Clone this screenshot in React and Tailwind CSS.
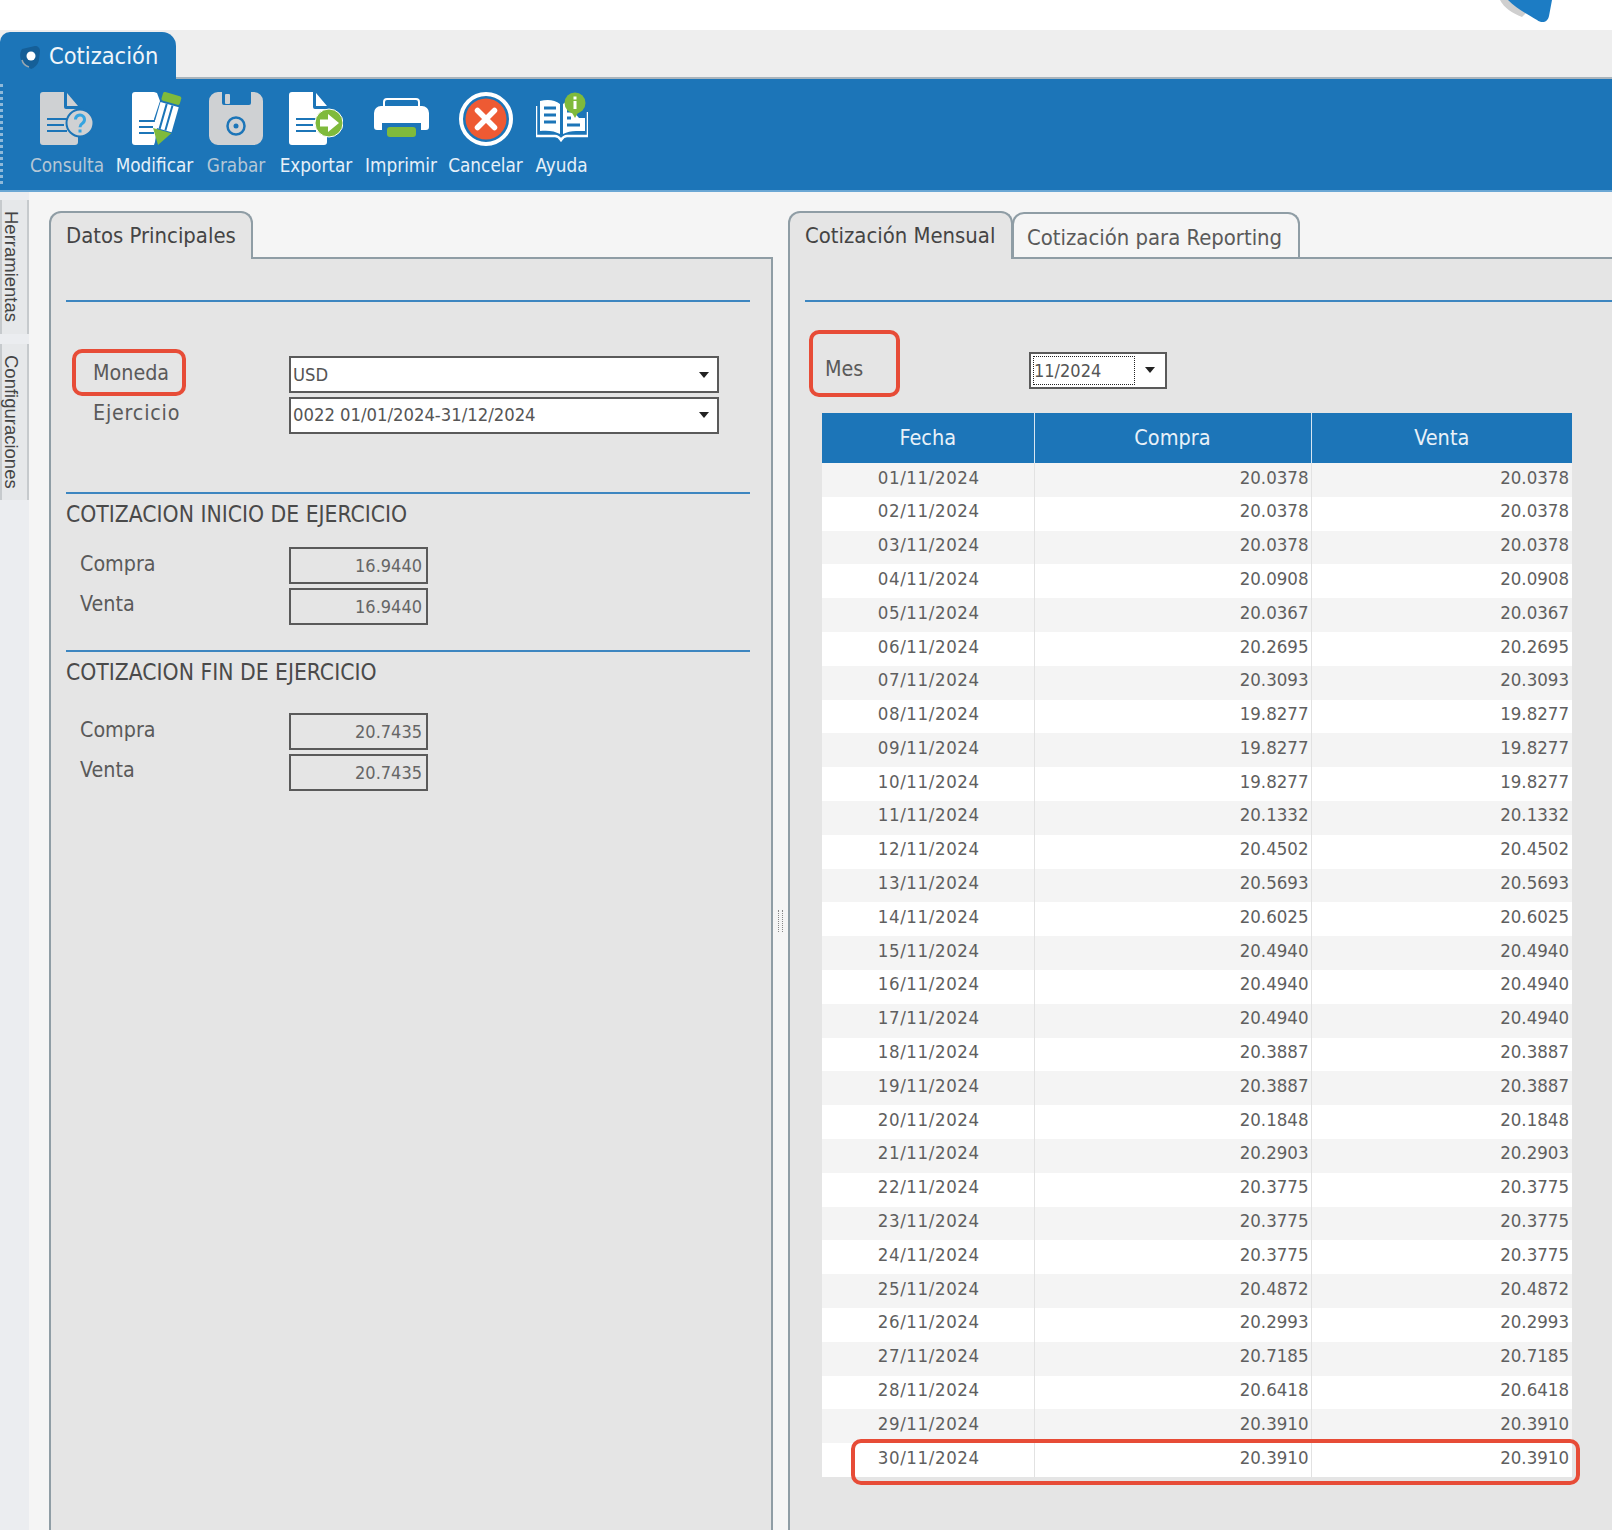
import React from 'react';

const rows = [
  ['01/11/2024', '20.0378'], ['02/11/2024', '20.0378'], ['03/11/2024', '20.0378'],
  ['04/11/2024', '20.0908'], ['05/11/2024', '20.0367'], ['06/11/2024', '20.2695'],
  ['07/11/2024', '20.3093'], ['08/11/2024', '19.8277'], ['09/11/2024', '19.8277'],
  ['10/11/2024', '19.8277'], ['11/11/2024', '20.1332'], ['12/11/2024', '20.4502'],
  ['13/11/2024', '20.5693'], ['14/11/2024', '20.6025'], ['15/11/2024', '20.4940'],
  ['16/11/2024', '20.4940'], ['17/11/2024', '20.4940'], ['18/11/2024', '20.3887'],
  ['19/11/2024', '20.3887'], ['20/11/2024', '20.1848'], ['21/11/2024', '20.2903'],
  ['22/11/2024', '20.3775'], ['23/11/2024', '20.3775'], ['24/11/2024', '20.3775'],
  ['25/11/2024', '20.4872'], ['26/11/2024', '20.2993'], ['27/11/2024', '20.7185'],
  ['28/11/2024', '20.6418'], ['29/11/2024', '20.3910'], ['30/11/2024', '20.3910'],
];

const BLUE = '#1c75b8';

const DocShape = ({ fill }) => (
  <>
    <path d="M3 0h21v15a2 2 0 0 0 2 2h12v33a3 3 0 0 1-3 3H3a3 3 0 0 1-3-3V3a3 3 0 0 1 3-3z" fill={fill} />
    <path d="M27 1l11 13H27z" fill={fill} />
    <path d="M7 27h20M7 33h17M7 39h20" stroke={BLUE} strokeWidth="2" />
  </>
);

const IconConsulta = () => (
  <svg width="54" height="54" viewBox="0 0 54 54">
    <DocShape fill="#cfd1d3" />
    <circle cx="40" cy="31" r="13.500" fill="#cfd1d3" stroke={BLUE} strokeWidth="2" />
    <path d="M35.500 27.500a4.500 4.500 0 1 1 7 3.700c-1.500 1-2.500 2-2.500 4" fill="none" stroke="#35a4e0" strokeWidth="3" />
    <rect x="38.500" y="37.500" width="3" height="3" fill="#35a4e0" />
  </svg>
);

const IconModificar = () => (
  <svg width="54" height="54" viewBox="-4 0 54 54">
    <path d="M3 0h19v53H3a3 3 0 0 1-3-3V3a3 3 0 0 1 3-3z" fill="#fff" />
    <path d="M22 0l3 1 3 8-6 18z" fill="#fff" />
    <path d="M22 28l4 0-3 22-1 3z" fill="#fff" />
    <path d="M7 29h16M7 35h14M7 41h15" stroke={BLUE} strokeWidth="2" />
    <g transform="translate(-3 0) rotate(16 36 27)">
      <rect x="27" y="1" width="19" height="9" rx="2" fill="#7fba3c" />
      <rect x="27" y="12" width="19" height="26" fill="#fff" />
      <path d="M33.500 12v26M39.500 12v26" stroke={BLUE} strokeWidth="2" />
      <path d="M27 39h19l-9.500 15z" fill="#7fba3c" />
    </g>
  </svg>
);

const IconGrabar = () => (
  <svg width="54" height="54" viewBox="0 0 54 54">
    <path d="M9 0h4v11a2 2 0 0 0 2 2h25a2 2 0 0 0 2-2V0h3a9 9 0 0 1 9 9v35a9 9 0 0 1-9 9H9a9 9 0 0 1-9-9V9a9 9 0 0 1 9-9z" fill="#cfd1d3" />
    <rect x="16" y="2" width="5" height="10" rx="1" fill="#cfd1d3" />
    <circle cx="27" cy="34" r="8.500" fill="none" stroke={BLUE} strokeWidth="2.500" />
    <circle cx="27" cy="34" r="2.500" fill={BLUE} />
  </svg>
);

const IconExportar = () => (
  <svg width="54" height="54" viewBox="0 0 54 54">
    <DocShape fill="#fff" />
    <circle cx="40" cy="31" r="14" fill="#7fba3c" stroke="#fff" strokeWidth="1" />
    <path d="M31 27.500h8V22l11 9-11 9v-5.500h-8z" fill="#fff" />
  </svg>
);

const IconImprimir = () => (
  <svg width="55" height="54" viewBox="0 0 55 54">
    <path d="M10 14V10a3 3 0 0 1 3-3h29a3 3 0 0 1 3 3v4" fill="none" stroke="#fff" strokeWidth="2" />
    <path d="M7 14h41a7 7 0 0 1 7 7v14a3 3 0 0 1-3 3h-5v-7H8v7H3a3 3 0 0 1-3-3V21a7 7 0 0 1 7-7z" fill="#fff" />
    <rect x="13" y="35" width="29" height="10" rx="3" fill="#7fba3c" />
  </svg>
);

const IconCancelar = () => (
  <svg width="54" height="54" viewBox="0 0 54 54">
    <circle cx="27" cy="27" r="25" fill={BLUE} stroke="#fff" strokeWidth="4" />
    <circle cx="27" cy="27" r="20.500" fill="#ee5a33" />
    <path d="M18.500 18.500l17 17M35.500 18.500l-17 17" stroke="#fff" strokeWidth="5.500" strokeLinecap="round" />
  </svg>
);

const IconAyuda = () => (
  <svg width="52" height="54" viewBox="0 0 52 54">
    {/* libro abierto */}
    <path d="M0 14v30h19c2 0 4 1 6 4 2-3 4-4 6-4h21V20" fill="none" stroke="#fff" strokeWidth="2.500" />
    <path d="M4 9c8-2 15-1 20 3v30c-5-3-12-4-20-3z" fill="#fff" />
    <path d="M27 12c2-2 5-3 8-3v8l8 9h6v13H40c-5 0-9 1-13 3z" fill="#fff" />
    <path d="M8 16h12M8 23h12M8 30h12M31 33h13" stroke={BLUE} strokeWidth="3" />
    <path d="M31 19h4M31 26h4" stroke={BLUE} strokeWidth="3" />
    <circle cx="39" cy="11" r="10.500" fill="#7fba3c" />
    <path d="M35 19h8l-4 7z" fill="#7fba3c" />
    <rect x="37.500" y="9" width="3" height="8" fill="#fff" />
    <rect x="37.500" y="4.500" width="3" height="3" fill="#fff" />
  </svg>
);

const tools = [
  { label: 'Consulta', width: 'w-[72px]', Icon: IconConsulta, text: 'text-[#b5c7d6]' },
  { label: 'Modificar', width: 'w-[79px]', Icon: IconModificar, text: 'text-[#e6f0f8]' },
  { label: 'Grabar', width: 'w-[60px]', Icon: IconGrabar, text: 'text-[#b5c7d6]' },
  { label: 'Exportar', width: 'w-[76px]', Icon: IconExportar, text: 'text-[#e6f0f8]' },
  { label: 'Imprimir', width: 'w-[70px]', Icon: IconImprimir, text: 'text-[#e6f0f8]' },
  { label: 'Cancelar', width: 'w-[75px]', Icon: IconCancelar, text: 'text-[#e6f0f8]' },
  { label: 'Ayuda', width: 'w-[53px]', Icon: IconAyuda, text: 'text-[#e6f0f8]' },
];

const Arrow = () => (
  <span className="w-0 h-0 border-x-[5px] border-x-transparent border-t-[6px] border-t-[#222]" />
);

const SelectBox = ({ value }) => (
  <div className="flex items-center justify-between h-[37px] w-[430px] bg-white border-2 border-[#5a5a5a] pl-[2px] pr-[8px] text-[18.300px] text-[#555]">
    <span>{value}</span>
    <Arrow />
  </div>
);

const ValueBox = ({ value }) => (
  <div className="flex items-center justify-end h-[37px] w-[139px] border-2 border-[#5a5a5a] pr-[4px] text-[18px] text-[#666]">
    {value}
  </div>
);

const FormRow = ({ label, labelClass, children }) => (
  <div className="flex items-center mb-[3.500px]">
    <div className={`w-[223px] pb-[4px] text-[21.300px] text-[#5a5a5a] ${labelClass}`}>{label}</div>
    {children}
  </div>
);

const Line = () => <div className="h-[2px] bg-[#3d86c0]" />;

const Heading = ({ children }) => (
  <div className="text-[22.700px] leading-[28px] text-[#4a4a4a] mt-[6px]">{children}</div>
);

const App = () => {
  return (
    <div className="relative h-[1530px] w-[1612px] overflow-hidden bg-white font-['DejaVu_Sans_Condensed','DejaVu_Sans',sans-serif]">
      {/* Logo recortado arriba */}
      <div className="flex justify-end h-[30px] pr-[58px]">
        <svg width="54" height="24" viewBox="0 0 54 24">
          <path d="M0 0c4 8 12 13 22 17l4-4L10 0z" fill="#cfcfcf" />
          <path d="M8 0h44l-3 16c-1 6-7 8-12 4C28 15 16 8 8 0z" fill="#1c7cc4" />
        </svg>
      </div>

      {/* Pestaña */}
      <div className="h-[49px] bg-[#eeeeee] pt-[2px] border-b-2 border-b-[#a9b4bc]">
        <div className="flex items-center gap-[6px] w-[176px] h-[47px] bg-[#1c75b8] rounded-tr-[14px] rounded-tl-[10px] pl-[18px] pt-[3px]">
          <svg width="25" height="25" viewBox="0 0 25 25">
            <path d="M4 4l13-3c3 0 5 2 5 5l-1 9c-1 5-5 8-8 9L5 18c-3-3-4-10-1-14z" fill="#155f98" />
            <path d="M4 15c1 4 4 6 7 7" fill="none" stroke="#9aa7b0" strokeWidth="1.500" />
            <circle cx="13" cy="11" r="4.500" fill="#fff" />
          </svg>
          <span className="text-[23.400px] text-[#f1f6fa]">Cotización</span>
        </div>
      </div>

      {/* Barra de herramientas */}
      <div className="relative flex gap-[12px] h-[113px] bg-[#1c75b8] pl-[31px] pt-[13px] border-b-2 border-b-[#6ba7d4]">
        <div className="absolute left-0 top-[5px] h-[100px] border-l-[3px] border-dotted border-l-[#8fb9d9]" />
        {tools.map(({ label, width, Icon, text }) => (
          <div key={label} className={`flex flex-col items-center shrink-0 ${width}`}>
            <Icon />
            <span className={`mt-[8px] text-[18.800px] leading-[24px] whitespace-nowrap ${text}`}>{label}</span>
          </div>
        ))}
      </div>

      <div className="flex h-[1338px] bg-[#f5f5f5]">
        {/* Pestañas laterales */}
        <div className="flex flex-col w-[29px] shrink-0 bg-[#ebedf0] pt-[8px] gap-[10px] font-['Liberation_Sans',sans-serif] text-[18.500px] text-[#444]">
          <div className="flex items-center justify-center h-[134px] bg-[#e6e8ea] border-y-2 border-r-2 border-[#c6cacd] pr-[6px] [writing-mode:vertical-rl]">
            Herramientas
          </div>
          <div className="flex items-center justify-center h-[156px] bg-[#e6e8ea] border-y-2 border-r-2 border-[#c6cacd] pr-[6px] [writing-mode:vertical-rl]">
            Configuraciones
          </div>
        </div>

        {/* Panel izquierdo */}
        <div className="flex flex-col w-[724px] ml-[20px] pt-[19px] shrink-0">
          <div className="flex items-center w-[204px] h-[48px] -mb-[2px] relative z-10 bg-[#e5e5e5] border-2 border-b-0 border-[#8f9da5] rounded-t-[12px] pl-[15px] text-[21.900px] text-[#444]">
            Datos Principales
          </div>
          <div className="flex-1 bg-[#e5e5e5] border-2 border-b-0 border-[#8f9da5] pt-[41px] pl-[15px] pr-[21px]">
            <Line />
            <div className="pt-[54px] h-[190px]">
              <FormRow label="Moneda" labelClass="pl-[27px]">
                <SelectBox value="USD" />
              </FormRow>
              <FormRow label="Ejercicio" labelClass="pl-[27px] tracking-[0.800px]">
                <SelectBox value="0022 01/01/2024-31/12/2024" />
              </FormRow>
            </div>
            <Line />
            <Heading>COTIZACION INICIO DE EJERCICIO</Heading>
            <div className="pt-[19px] pb-[22px]">
              <FormRow label="Compra" labelClass="pl-[14px]"><ValueBox value="16.9440" /></FormRow>
              <FormRow label="Venta" labelClass="pl-[14px]"><ValueBox value="16.9440" /></FormRow>
            </div>
            <Line />
            <Heading>COTIZACION FIN DE EJERCICIO</Heading>
            <div className="pt-[27px]">
              <FormRow label="Compra" labelClass="pl-[14px]"><ValueBox value="20.7435" /></FormRow>
              <FormRow label="Venta" labelClass="pl-[14px]"><ValueBox value="20.7435" /></FormRow>
            </div>
          </div>
        </div>

        {/* Separador */}
        <div className="flex items-center justify-center w-[15px] shrink-0">
          <div className="w-[5px] h-[22px] mt-[120px] border-x border-dotted border-x-[#888]" />
        </div>

        {/* Panel derecho */}
        <div className="flex flex-col flex-1 pt-[19px] min-w-0">
          <div className="flex items-end -mb-[2px] relative z-10">
            <div className="flex items-center w-[225px] h-[48px] bg-[#e5e5e5] border-2 border-b-0 border-[#8f9da5] rounded-t-[12px] pl-[15px] text-[21.900px] text-[#444]">
              Cotización Mensual
            </div>
            <div className="flex items-center w-[288px] h-[45px] -ml-px mb-[2px] bg-[#f5f5f5] border-2 border-b-0 border-[#8f9da5] rounded-t-[12px] pl-[13px] pt-[6px] text-[21.900px] text-[#5a5a5a]">
              Cotización para Reporting
            </div>
          </div>
          <div className="flex-1 bg-[#e5e5e5] border-l-2 border-t-2 border-[#8f9da5] pt-[41px] pl-[15px]">
            <Line />
            <div className="flex items-center pt-[50px] h-[86px]">
              <div className="relative w-[224px] pl-[20px] pb-[2px] text-[21.300px] text-[#5a5a5a]">
                Mes
                <div className="absolute left-[4px] top-[-23px] w-[91px] h-[67px] border-4 border-[#e74c37] rounded-[10px]" />
              </div>
              <div className="flex items-center h-[37px] w-[138px] bg-white border-2 border-[#5a5a5a] pl-[2px] pr-[10px] text-[18px] text-[#555]">
                <span className="flex-1 h-[29px] leading-[27px] mr-[10px] border border-dotted border-[#222]">11/2024</span>
                <Arrow />
              </div>
            </div>
            <div className="relative w-[750px] ml-[17px] mt-[25px]">
              <table className="table-fixed w-full border-collapse text-[18.500px] text-[#5f5f5f]">
                <colgroup>
                  <col className="w-[212px]" />
                  <col className="w-[277px]" />
                  <col className="w-[261px]" />
                </colgroup>
                <thead>
                  <tr className="h-[50px] bg-[#1c75b8] text-[#e8f1f8] text-[21.500px]">
                    <th className="font-normal pt-[1px] border-r border-r-[#d7e6f2]">Fecha</th>
                    <th className="font-normal pt-[1px] border-r border-r-[#d7e6f2]">Compra</th>
                    <th className="font-normal pt-[1px]">Venta</th>
                  </tr>
                </thead>
                <tbody>
                  {rows.map(([fecha, valor], i) => (
                    <tr key={fecha} className={`h-[33.800px] ${i % 2 === 0 ? 'bg-[#f4f4f4]' : 'bg-white'}`}>
                      <td className="p-0 pb-[5px] pl-[2px] text-center tracking-[0.600px] border-r border-r-[#e2e2e2]">{fecha}</td>
                      <td className="p-0 pb-[5px] pr-[2px] text-right border-r border-r-[#e2e2e2]">{valor}</td>
                      <td className="p-0 pb-[5px] pr-[3px] text-right">{valor}</td>
                    </tr>
                  ))}
                </tbody>
              </table>
              <div className="absolute left-[29px] -right-[8px] -bottom-[8px] h-[46px] border-4 border-[#e74c37] rounded-[10px]" />
            </div>
          </div>
        </div>
      </div>

      {/* Recuadro rojo de Moneda */}
      <div className="absolute left-[72px] top-[349px] w-[114px] h-[47px] border-4 border-[#e74c37] rounded-[10px]" />
    </div>
  );
};

export default App;
